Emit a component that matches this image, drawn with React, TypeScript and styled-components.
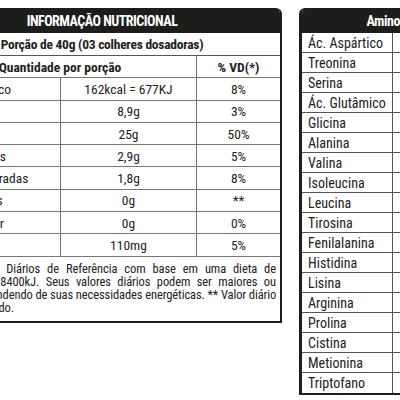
import styled, { createGlobalStyle } from "styled-components"

const GlobalStyle = createGlobalStyle`
  html, body {
    margin: 0;
    padding: 0;
    background: #ffffff;
    overflow: hidden;
  }
  body {
    font-family: "Roboto Condensed", "Roboto", "Liberation Sans", sans-serif;
    font-stretch: condensed;
    color: #222;
  }
`

const Page = styled.div`
  width: 480px;
  height: 400px;
  overflow: hidden;
  display: flex;
  align-items: flex-start;
  gap: 17px;
  padding-top: 8px;
  margin-left: -78px;
`

const Card = styled.div<{ $width: number; $thickLeft?: boolean }>`
  flex: none;
  width: ${(p) => p.$width}px;
  border: 2px solid #1d1d1b;
  border-left-width: ${(p) => (p.$thickLeft ? 3 : 2)}px;
  border-top: none;
  border-radius: 6px 6px 0 0;
  overflow: hidden;
  box-sizing: border-box;
`

const Header = styled.div`
  height: 25px;
  background: #1d1d1b;
  color: #fff;
  font-weight: 700;
  font-size: 14px;
  letter-spacing: -0.5px;
  display: flex;
  align-items: center;
  justify-content: center;
`

const Serving = styled.div`
  height: 22px;
  display: flex;
  align-items: center;
  justify-content: center;
  font-weight: 700;
  font-size: 13.5px;
  letter-spacing: -0.25px;
  border-bottom: 1px solid #555;
`

const Row = styled.div<{ $bold?: boolean }>`
  display: grid;
  grid-template-columns: 137px 136px 1fr;
  height: 22.3px;
  font-size: 13.5px;
  font-weight: ${(p) => (p.$bold ? 700 : 400)};
  border-bottom: 1px solid #777;
  box-sizing: border-box;
`

const Cell = styled.div<{ $left?: boolean; $span?: number }>`
  display: flex;
  align-items: center;
  justify-content: ${(p) => (p.$left ? "flex-start" : "center")};
  grid-column: span ${(p) => p.$span ?? 1};
  border-right: 1px solid #777;
  white-space: nowrap;
  &:last-child {
    border-right: none;
  }
`

const Footnote = styled.div`
  padding: 5px 4px 7px 4px;
  font-size: 12.5px;
  line-height: 13px;
  letter-spacing: -0.1px;
`

const Line = styled.div<{ $last?: boolean }>`
  text-align: justify;
  text-align-last: ${(p) => (p.$last ? "left" : "justify")};
  white-space: nowrap;
`

const AminoRow = styled.div`
  display: grid;
  grid-template-columns: 91px 1fr;
  height: 20px;
  font-size: 14px;
  border-bottom: 1px solid #555;
  box-sizing: border-box;
  &:last-child {
    border-bottom: none;
  }
`

const AminoCell = styled.div`
  display: flex;
  align-items: center;
  padding-left: 6px;
  border-right: 1px solid #555;
  white-space: nowrap;
  &:last-child {
    border-right: none;
  }
`

const nutrients = [
  ["Valor energético", "162kcal = 677KJ", "8%"],
  ["Carboidratos", "8,9g", "3%"],
  ["Proteínas", "25g", "50%"],
  ["Gorduras totais", "2,9g", "5%"],
  ["Gorduras saturadas", "1,8g", "8%"],
  ["Gorduras trans", "0g", "**"],
  ["Fibra alimentar", "0g", "0%"],
  ["Sódio", "110mg", "5%"],
]

const aminos = [
  "Ác. Aspártico", "Treonina", "Serina", "Ác. Glutâmico", "Glicina", "Alanina",
  "Valina", "Isoleucina", "Leucina", "Tirosina", "Fenilalanina", "Histidina",
  "Lisina", "Arginina", "Prolina", "Cistina", "Metionina", "Triptofano",
]

export default function App() {
  return (
    <>
      <GlobalStyle />
      <Page>
        <Card $width={360}>
          <Header>INFORMAÇÃO NUTRICIONAL</Header>
          <Serving>Porção de 40g (03 colheres dosadoras)</Serving>
          <Row $bold>
            <Cell $span={2}>Quantidade por porção</Cell>
            <Cell>% VD(*)</Cell>
          </Row>
          {nutrients.map(([name, amount, vd]) => (
            <Row key={name}>
              <Cell $left>{name}</Cell>
              <Cell>{amount}</Cell>
              <Cell>{vd}</Cell>
            </Row>
          ))}
          <Footnote>
            <Line>(*) % Valores Diários de Referência com base em uma dieta de</Line>
            <Line>2.000kcal ou 8400kJ. Seus valores diários podem ser maiores ou</Line>
            <Line>menores dependendo de suas necessidades energéticas. ** Valor diário</Line>
            <Line $last>não estabelecido.</Line>
          </Footnote>
        </Card>
        <Card $width={200} $thickLeft>
          <Header>Aminograma</Header>
          {aminos.map((a) => (
            <AminoRow key={a}>
              <AminoCell>{a}</AminoCell>
              <AminoCell />
            </AminoRow>
          ))}
        </Card>
      </Page>
    </>
  )
}
